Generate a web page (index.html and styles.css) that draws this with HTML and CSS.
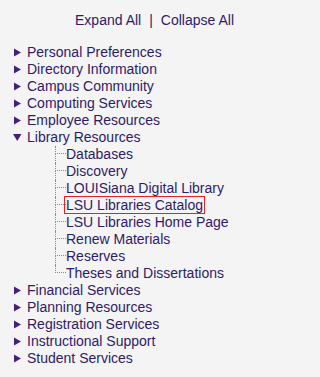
FILE: index.html
```html
<!DOCTYPE html>
<html>
<head>
<meta charset="utf-8">
<link rel="stylesheet" href="styles.css">
</head>
<body>
<div class="toolbar"><a class="tool">Expand All</a><span class="sep">|</span><a class="tool">Collapse All</a></div>
<ul class="menu">
  <li class="item"><svg class="tri" width="9" height="9" viewBox="0 0 9 9"><polygon points="1,0.5 8,4.5 1,8.5"/></svg><span class="label">Personal Preferences</span></li>
  <li class="item"><svg class="tri" width="9" height="9" viewBox="0 0 9 9"><polygon points="1,0.5 8,4.5 1,8.5"/></svg><span class="label">Directory Information</span></li>
  <li class="item"><svg class="tri" width="9" height="9" viewBox="0 0 9 9"><polygon points="1,0.5 8,4.5 1,8.5"/></svg><span class="label">Campus Community</span></li>
  <li class="item"><svg class="tri" width="9" height="9" viewBox="0 0 9 9"><polygon points="1,0.5 8,4.5 1,8.5"/></svg><span class="label">Computing Services</span></li>
  <li class="item"><svg class="tri" width="9" height="9" viewBox="0 0 9 9"><polygon points="1,0.5 8,4.5 1,8.5"/></svg><span class="label">Employee Resources</span></li>
  <li class="group">
    <div class="item"><svg class="tri" width="9" height="9" viewBox="0 0 9 9"><polygon points="0,1 8.5,1 4.25,8"/></svg><span class="label">Library Resources</span></div>
    <ul class="sub">
      <li class="child"><span class="branch"></span><span class="label">Databases</span></li>
      <li class="child"><span class="branch"></span><span class="label">Discovery</span></li>
      <li class="child"><span class="branch"></span><span class="label">LOUISiana Digital Library</span></li>
      <li class="child"><span class="branch"></span><span class="label"><a class="current">LSU Libraries Catalog</a></span></li>
      <li class="child"><span class="branch"></span><span class="label">LSU Libraries Home Page</span></li>
      <li class="child"><span class="branch"></span><span class="label">Renew Materials</span></li>
      <li class="child"><span class="branch"></span><span class="label">Reserves</span></li>
      <li class="child"><span class="branch"></span><span class="label">Theses and Dissertations</span></li>
    </ul>
  </li>
  <li class="item"><svg class="tri" width="9" height="9" viewBox="0 0 9 9"><polygon points="1,0.5 8,4.5 1,8.5"/></svg><span class="label">Financial Services</span></li>
  <li class="item"><svg class="tri" width="9" height="9" viewBox="0 0 9 9"><polygon points="1,0.5 8,4.5 1,8.5"/></svg><span class="label">Planning Resources</span></li>
  <li class="item"><svg class="tri" width="9" height="9" viewBox="0 0 9 9"><polygon points="1,0.5 8,4.5 1,8.5"/></svg><span class="label">Registration Services</span></li>
  <li class="item"><svg class="tri" width="9" height="9" viewBox="0 0 9 9"><polygon points="1,0.5 8,4.5 1,8.5"/></svg><span class="label">Instructional Support</span></li>
  <li class="item"><svg class="tri" width="9" height="9" viewBox="0 0 9 9"><polygon points="1,0.5 8,4.5 1,8.5"/></svg><span class="label">Student Services</span></li>
</ul>
</body>
</html>
```
FILE: styles.css
```css
html, body {
  margin: 0;
  padding: 0;
  background: #f4f4f4;
}
body {
  width: 247px;
  font-family: "Liberation Sans", Arial, sans-serif;
  font-size: 14px;
  line-height: 17px;
  color: #2f1b68;
}
.toolbar {
  text-align: right;
  padding: 12px 13px 0 0;
}
.tool {
  color: #2f1b68;
}
.sep {
  margin: 0 8px;
}
.menu {
  list-style: none;
  margin: 15px 0 0 0;
  padding: 0 0 0 13px;
}
.item {
  display: flex;
  align-items: center;
  height: 17px;
}
.tri {
  flex: none;
  fill: #46207e;
  margin-right: 5px;
}
.sub {
  list-style: none;
  margin: 0;
  padding: 0 0 0 42px;
}
.child {
  display: flex;
  height: 17px;
}
.branch {
  flex: none;
  width: 11px;
  display: flex;
  flex-direction: column;
}
.branch::before {
  content: "";
  height: 7px;
  border-left: 1px dotted #8a8a8a;
  border-bottom: 1px dotted #8a8a8a;
}
.branch::after {
  content: "";
  flex: 1;
  border-left: 1px dotted #8a8a8a;
}
.child:last-child .branch::after {
  border-left: none;
}
.label {
  white-space: nowrap;
}
.current {
  border: 1px solid #e8231f;
  padding: 0 1px;
  margin-left: -2px;
}
```
